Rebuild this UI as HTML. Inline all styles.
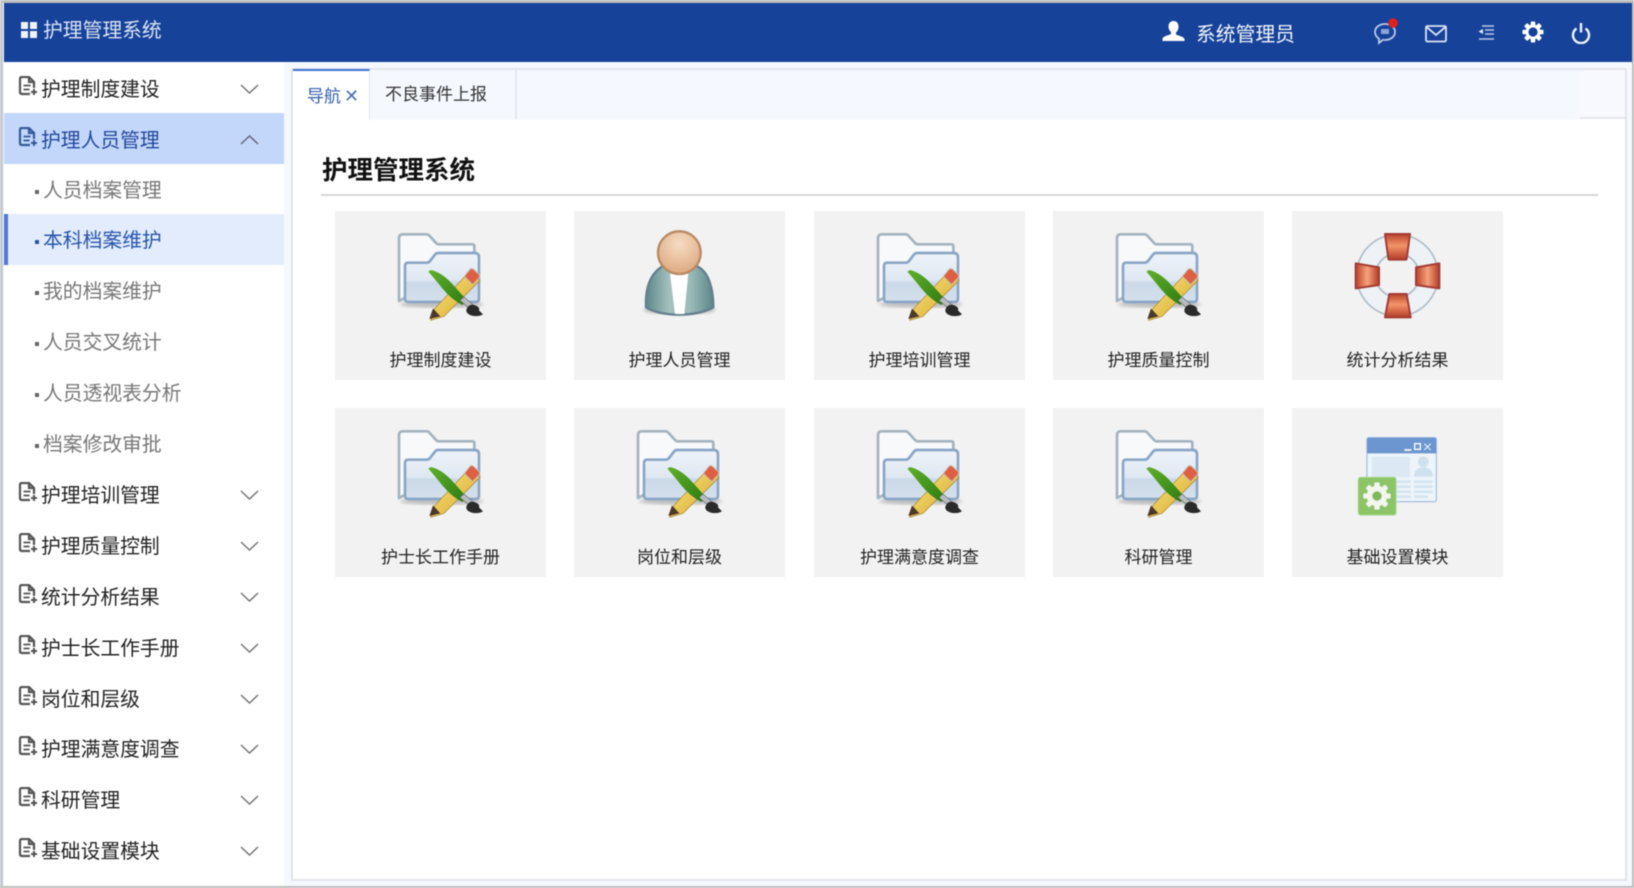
<!DOCTYPE html>
<html lang="zh-CN">
<head>
<meta charset="utf-8">
<title>护理管理系统</title>
<style>
html,body{margin:0;padding:0;width:1634px;height:888px;overflow:hidden;background:#fff}
*{box-sizing:border-box}
#p{position:relative;width:1634px;height:888px;overflow:hidden;background:#f5f8ff;font-family:"Liberation Sans","Noto Sans CJK SC",sans-serif;filter:blur(.45px)}
.abs{position:absolute}
#hd{left:4px;top:3px;width:1628px;height:59px;background:#16429a}
#title{left:43px;top:17px;font-size:19.8px;line-height:29px;color:#dbe4f4;white-space:nowrap}
#user{left:1196px;top:20px;font-size:19.8px;line-height:30px;color:#f2f5fb;white-space:nowrap}
#side{left:4px;top:62px;width:280px;height:824px;background:#fff}
.r{position:relative;height:50.8px;line-height:57px;font-size:19.8px;color:#222;padding-left:37px;white-space:nowrap}
.r.on{background:#c3d7fb;color:#23489a}
.r.s{padding-left:39px;line-height:55px;color:#777}
.r.s:before{content:"";position:absolute;left:31px;top:26px;width:4px;height:4px;background:#666}
.r.cur{background:#e2ecfd;color:#2654a8}
.r.cur:before{background:#2654a8}
.r.cur:after{content:"";position:absolute;left:0;top:0;width:4px;height:100%;background:#4a78d8}
.r svg.d{position:absolute;left:14px;top:14px;width:20px;height:21px}
.r svg.c{position:absolute;left:236px;top:22px;width:19px;height:10px}
#box{left:291px;top:68px;width:1336px;height:813px;background:#fff;border:2px solid #e3e4ea}
#strip{left:293px;top:70px;width:1287px;height:50px;background:#f5f8ff}
#strip2{left:1580px;top:70px;width:45px;height:49px;background:#f8f9ff;border-bottom:2px solid #e6e7ee}
#t1{left:293px;top:69px;width:77px;height:51px;background:#fff;border-top:2px solid #3d72d6;border-right:1px solid #dbe3f2;color:#3560ae;font-size:17px;line-height:50px;padding-left:14px;white-space:nowrap}
#t1 b{font-weight:normal;font-size:18px;margin-left:3px;color:#4a70b8}
#t2{left:370px;top:70px;width:147px;height:49px;border-right:2px solid #e3e8f3;font-size:17px;line-height:50px;color:#333;padding-left:15px;white-space:nowrap}
#h{left:322px;top:153px;font-size:25.5px;font-weight:bold;line-height:36px;color:#111;white-space:nowrap}
#ln{left:321px;top:194px;width:1277px;height:2px;background:#d8d8d8}
.k{position:absolute;width:211px;height:169px;background:#f2f2f2}
.k span{position:absolute;left:0;right:0;top:138px;text-align:center;font-size:17px;line-height:24px;color:#222;white-space:nowrap}
.k svg{position:absolute;left:50px;top:10px;width:110px;height:100px}
</style>
</head>
<body>
<svg width="0" height="0" style="position:absolute">
<defs>
<linearGradient id="fg" x1="0" y1="0" x2="0" y2="1"><stop offset="0" stop-color="#eef3f9"/><stop offset=".55" stop-color="#dfe8f2"/><stop offset=".6" stop-color="#cbd9e8"/><stop offset="1" stop-color="#d4e0ec"/></linearGradient>
<linearGradient id="yl" x1="0" y1="0" x2="1" y2="1"><stop offset="0" stop-color="#f8e88a"/><stop offset="1" stop-color="#d9a520"/></linearGradient>
<linearGradient id="gr" x1="0" y1="0" x2="1" y2="1"><stop offset="0" stop-color="#5fb02c"/><stop offset="1" stop-color="#2c7a10"/></linearGradient>
<radialGradient id="hd1" cx=".5" cy=".3" r=".75"><stop offset="0" stop-color="#f6dcc4"/><stop offset="1" stop-color="#dca67c"/></radialGradient>
<linearGradient id="bd" x1="0" y1="0" x2="1" y2="0"><stop offset="0" stop-color="#5d8788"/><stop offset=".35" stop-color="#a4c1bf"/><stop offset=".65" stop-color="#9cbcba"/><stop offset="1" stop-color="#5d8788"/></linearGradient>
<linearGradient id="rv" x1="0" y1="0" x2="0" y2="1"><stop offset="0" stop-color="#b8432a"/><stop offset=".45" stop-color="#f5946a"/><stop offset="1" stop-color="#b23c26"/></linearGradient>
<linearGradient id="rh" x1="0" y1="0" x2="1" y2="0"><stop offset="0" stop-color="#b8432a"/><stop offset=".5" stop-color="#f7a27c"/><stop offset="1" stop-color="#b23c26"/></linearGradient>
<filter id="bl"><feGaussianBlur stdDeviation="5"/></filter>
<symbol id="doc" viewBox="0 0 20 21"><path d="M4 1h7l5 5v6M16 6h-5V1M4 1Q2 1 2 3v13q0 2 2 2h8" fill="none" stroke="#555" stroke-width="2.200"/><path d="M5.500 9.500h7M5.500 13.500h6" stroke="#555" stroke-width="1.800"/><path d="M16 13v6M13 16h6" stroke="#555" stroke-width="2"/></symbol>
<symbol id="docb" viewBox="0 0 20 21"><path d="M4 1h7l5 5v6M16 6h-5V1M4 1Q2 1 2 3v13q0 2 2 2h8" fill="none" stroke="#36599b" stroke-width="2.200"/><path d="M5.500 9.500h7M5.500 13.500h6" stroke="#36599b" stroke-width="1.800"/><path d="M16 13v6M13 16h6" stroke="#36599b" stroke-width="2"/></symbol>
<symbol id="dn" viewBox="0 0 19 10"><path d="M1 1l8.500 8L18 1" fill="none" stroke="#777" stroke-width="1.500"/></symbol>
<symbol id="up" viewBox="0 0 19 10"><path d="M1 9l8.500-8L18 9" fill="none" stroke="#667" stroke-width="1.500"/></symbol>
<symbol id="folder" viewBox="0 0 330 300">
<ellipse cx="170" cy="250" rx="125" ry="10" fill="#999" opacity=".6" filter="url(#bl)"/>
<path d="M42 240V52q0-12 12-12h70q6 0 10 5l20 22q3 3 8 3h100q6 0 6 6v40z" fill="#f8f9fb" stroke="#a3b3bf" stroke-width="8" stroke-linejoin="round"/>
<path d="M60 135q0-10 10-10h55q6 0 10-5l14-18q4-6 10-6h110q13 0 13 13v124q0 10-10 10H70q-10 0-10-10z" fill="url(#fg)" stroke="#8aa6c6" stroke-width="8" stroke-linejoin="round"/>
<path d="M150 262l105-112 30 28-108 108-40 12z" fill="url(#yl)" stroke="#a8822a" stroke-width="2"/>
<path d="M133 294l11-32 22 24z" fill="#4a3a2a"/>
<path d="M238 166l16-20q5-6 12-1l16 15q5 6 0 11l-19 20z" fill="#de5f42" stroke="#c9c2b4" stroke-width="3"/>
<path d="M138 147q32 8 60 38t48 54l-14 13q-34-18-60-50t-42-50z" fill="url(#gr)"/>
<path d="M225 238l12-10 28 24-10 12z" fill="#b8bcc0" stroke="#666" stroke-width="2"/>
<path d="M244 266q6-18 24-14 18 6 14 16l12 12q-14 8-34 4-18-6-16-18z" fill="#2a2a2a"/>
</symbol>
<symbol id="person" viewBox="0 0 420 360">
<ellipse cx="178" cy="300" rx="108" ry="12" fill="#999" opacity=".7" filter="url(#bl)"/>
<path d="M78 292q-3-62 22-98 15-20 36-30h86q30 12 42 40 16 35 16 88-40 22-102 22t-100-22z" fill="url(#bd)" stroke="#64808f" stroke-width="7" stroke-linejoin="round"/>
<path d="M150 190h55l-12 122h-28z" fill="#fff"/>
<circle cx="178" cy="128" r="64" fill="url(#hd1)" stroke="#b88b66" stroke-width="7"/>
</symbol>
<symbol id="buoy" viewBox="0 0 360 330">
<circle cx="172" cy="166" r="94" fill="none" stroke="#afbcc8" stroke-width="62"/>
<circle cx="172" cy="166" r="94" fill="none" stroke="#eef2f6" stroke-width="52"/>
<path d="M135 42h75l-10 74q-1 3-4 3h-47q-3 0-4-3z" fill="url(#rv)" stroke="#a33b34" stroke-width="6" stroke-linejoin="round"/>
<path d="M148 222h52l12 70h-77z" fill="url(#rv)" stroke="#a33b34" stroke-width="6" stroke-linejoin="round"/>
<path d="M47 130l70 12v53l-70 10z" fill="url(#rh)" stroke="#a33b34" stroke-width="6" stroke-linejoin="round"/>
<path d="M228 142l70-12v75l-70-10z" fill="url(#rh)" stroke="#a33b34" stroke-width="6" stroke-linejoin="round"/>
</symbol>
<symbol id="win" viewBox="0 0 360 330">
<rect x="81" y="53" width="208" height="192" rx="6" fill="#edf5fb" stroke="#a9c4e0" stroke-width="4"/>
<path d="M81 100V59q0-6 6-6h196q6 0 6 6v41z" fill="#6c96cf"/>
<path d="M193 90h21" stroke="#fff" stroke-width="5"/>
<rect x="224" y="71" width="17" height="17" fill="none" stroke="#fff" stroke-width="4"/>
<path d="M253 71l19 19M272 71l-19 19" stroke="#e6eef8" stroke-width="3.500"/>
<rect x="95" y="110" width="115" height="62" fill="#dce9f5"/>
<circle cx="250" cy="125" r="16" fill="#cfe0ee"/>
<path d="M222 170q0-28 28-28t28 28z" fill="#cfe0ee"/>
<path d="M170 185h42M170 200h42M170 215h42M170 230h42M222 185h56M222 200h56M222 215h56M222 230h42" stroke="#d3e3f0" stroke-width="8"/>
<rect x="55" y="172" width="113" height="113" rx="7" fill="#8cc568" stroke="#a5d385" stroke-width="3"/>
<g transform="translate(111 228)" fill="#f3f5ef">
<circle r="31"/>
<rect x="-8" y="-41" width="16" height="82" rx="3"/><rect x="-8" y="-41" width="16" height="82" rx="3" transform="rotate(45)"/><rect x="-8" y="-41" width="16" height="82" rx="3" transform="rotate(90)"/><rect x="-8" y="-41" width="16" height="82" rx="3" transform="rotate(135)"/>
<circle r="14" fill="#7eb85c"/>
</g>
</symbol>
</defs>
</svg>
<div id="p">
<div class="abs" style="left:0;top:0;width:1634px;height:3px;background:#bcbcbc"></div>
<div class="abs" style="left:0;top:0;width:3px;height:888px;background:#c3c8cf"></div>
<div class="abs" style="left:1632px;top:0;width:2px;height:888px;background:#bcbcbc"></div>
<div class="abs" style="left:0;top:886px;width:1634px;height:2px;background:#bcbcbc"></div>
<div class="abs" id="hd"></div>
<svg class="abs" style="left:20px;top:21px" width="18" height="18" viewBox="0 0 18 18"><path d="M1 1h7v7H1zM10 1h7v7h-7zM1 10h7v7H1zM10 10h7v7h-7z" fill="#f0f3fa"/></svg>
<div class="abs" id="title">护理管理系统</div>
<svg class="abs" style="left:1162px;top:20px" width="23" height="22" viewBox="0 0 23 22"><path d="M11.500 1c3.500 0 5 2.500 5 5.500 0 2.500-1 5-2.500 6v2c2 1.200 7.500 2 8.500 4.500V21H.5v-2.500C1.500 16 7 15.200 9 14v-2C7.500 11 6.500 8.500 6.500 6.500 6.500 3.500 8 1 11.500 1z" fill="#fff"/></svg>
<div class="abs" id="user">系统管理员</div>
<svg class="abs" style="left:1372px;top:17px" width="28" height="28" viewBox="0 0 28 28">
<path d="M13 7c5.500 0 10 3.300 10 8s-4.500 8-10 8c-.7 0-1.400 0-2-.2L7 26v-4.300C4.500 20 3 17.700 3 15c0-4.700 4.500-8 10-8z" fill="none" stroke="#b9c9e6" stroke-width="1.800"/>
<rect x="9" y="12" width="8" height="5" fill="#8aa5d6"/>
<circle cx="21" cy="6" r="4.800" fill="#e0201a"/></svg>
<svg class="abs" style="left:1425px;top:25px" width="22" height="18" viewBox="0 0 22 18"><rect x="1" y="1" width="20" height="15.500" rx="1.500" fill="none" stroke="#dbe3f3" stroke-width="1.800"/><path d="M1.500 2l9.500 8 9.500-8" fill="none" stroke="#dbe3f3" stroke-width="1.800"/></svg>
<svg class="abs" style="left:1477px;top:24px" width="18" height="17" viewBox="0 0 18 17"><path d="M5 2h12M8 6h9M8 10h9M2 15h15" stroke="#b9c9e6" stroke-width="1.500"/><path d="M6 5v5L1.500 7.500z" fill="#e4eaf6"/></svg>
<svg class="abs" style="left:1521px;top:20px" width="24" height="24" viewBox="-12 -12 24 24"><g fill="#fff"><rect x="-2.300" y="-10.500" width="4.600" height="21" rx="1"/><rect x="-2.300" y="-10.500" width="4.600" height="21" rx="1" transform="rotate(45)"/><rect x="-2.300" y="-10.500" width="4.600" height="21" rx="1" transform="rotate(90)"/><rect x="-2.300" y="-10.500" width="4.600" height="21" rx="1" transform="rotate(135)"/></g><circle r="7.500" fill="#fff"/><circle r="4.600" fill="#16429a"/></svg>
<svg class="abs" style="left:1571px;top:22px" width="20" height="22" viewBox="0 0 20 22"><path d="M5.500 6.500a8 8 0 1 0 9 0" fill="none" stroke="#eef2fa" stroke-width="2.400"/><path d="M10 1v9.500" stroke="#eef2fa" stroke-width="2.400"/></svg>

<div class="abs" id="side">
<div class="r"><svg class="d"><use href="#doc"/></svg>护理制度建设<svg class="c"><use href="#dn"/></svg></div>
<div class="r on"><svg class="d"><use href="#docb"/></svg>护理人员管理<svg class="c"><use href="#up"/></svg></div>
<div class="r s">人员档案管理</div>
<div class="r s cur">本科档案维护</div>
<div class="r s">我的档案维护</div>
<div class="r s">人员交叉统计</div>
<div class="r s">人员透视表分析</div>
<div class="r s">档案修改审批</div>
<div class="r"><svg class="d"><use href="#doc"/></svg>护理培训管理<svg class="c"><use href="#dn"/></svg></div>
<div class="r"><svg class="d"><use href="#doc"/></svg>护理质量控制<svg class="c"><use href="#dn"/></svg></div>
<div class="r"><svg class="d"><use href="#doc"/></svg>统计分析结果<svg class="c"><use href="#dn"/></svg></div>
<div class="r"><svg class="d"><use href="#doc"/></svg>护士长工作手册<svg class="c"><use href="#dn"/></svg></div>
<div class="r"><svg class="d"><use href="#doc"/></svg>岗位和层级<svg class="c"><use href="#dn"/></svg></div>
<div class="r"><svg class="d"><use href="#doc"/></svg>护理满意度调查<svg class="c"><use href="#dn"/></svg></div>
<div class="r"><svg class="d"><use href="#doc"/></svg>科研管理<svg class="c"><use href="#dn"/></svg></div>
<div class="r"><svg class="d"><use href="#doc"/></svg>基础设置模块<svg class="c"><use href="#dn"/></svg></div>
</div>

<div class="abs" id="box"></div>
<div class="abs" id="strip"></div>
<div class="abs" id="strip2"></div>
<div class="abs" id="t1">导航<b>✕</b></div>
<div class="abs" id="t2">不良事件上报</div>
<div class="abs" id="h">护理管理系统</div>
<div class="abs" id="ln"></div>

<div class="k" style="left:335px;top:211px"><svg><use href="#folder"/></svg><span>护理制度建设</span></div>
<div class="k" style="left:574px;top:211px"><svg style="left:46px;top:-1px;width:140px;height:120px"><use href="#person"/></svg><span>护理人员管理</span></div>
<div class="k" style="left:814px;top:211px"><svg><use href="#folder"/></svg><span>护理培训管理</span></div>
<div class="k" style="left:1053px;top:211px"><svg><use href="#folder"/></svg><span>护理质量控制</span></div>
<div class="k" style="left:1292px;top:211px"><svg style="left:48px;top:9px;width:120px;height:110px"><use href="#buoy"/></svg><span>统计分析结果</span></div>
<div class="k" style="left:335px;top:408px"><svg><use href="#folder"/></svg><span>护士长工作手册</span></div>
<div class="k" style="left:574px;top:408px"><svg><use href="#folder"/></svg><span>岗位和层级</span></div>
<div class="k" style="left:814px;top:408px"><svg><use href="#folder"/></svg><span>护理满意度调查</span></div>
<div class="k" style="left:1053px;top:408px"><svg><use href="#folder"/></svg><span>科研管理</span></div>
<div class="k" style="left:1292px;top:408px"><svg style="left:48px;top:12px;width:120px;height:110px"><use href="#win"/></svg><span>基础设置模块</span></div>
</div>
</body>
</html>
